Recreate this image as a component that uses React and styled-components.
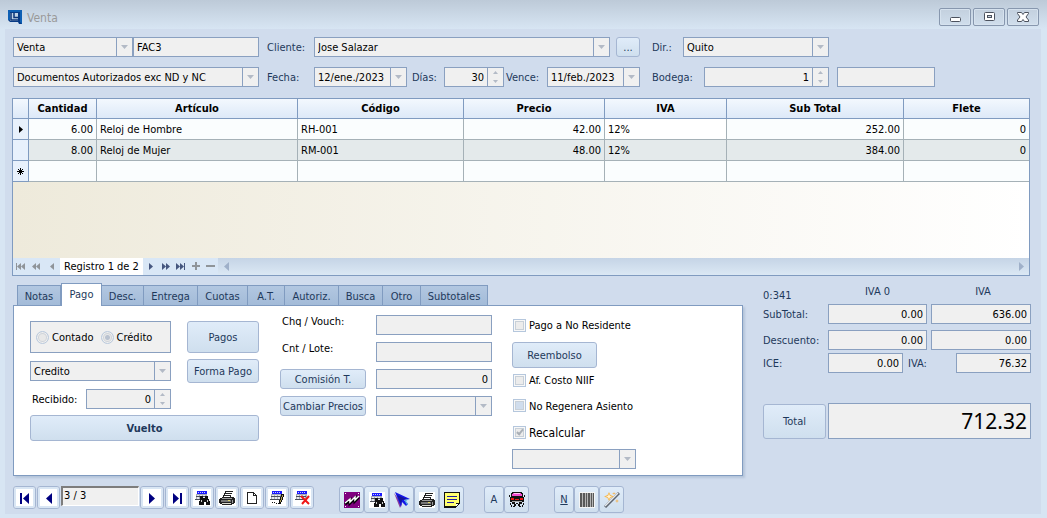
import React from 'react';
import styled, { createGlobalStyle, css } from 'styled-components';

const c = {
  line: '#8aa0c0',
  gridLine: '#a5b1b7',
  headLine: '#809bc0',
  field: '#f0f0f0',
  label: '#1e395b',
  panel: '#d0dced',
  frame: '#d7e5f3',
};

const Global = createGlobalStyle`
  *, *::before, *::after { box-sizing: border-box; }
  body { margin: 0; background: ${c.frame}; }
  body, button, input, select, table {
    font-family: Tahoma, "DejaVu Sans Condensed", "DejaVu Sans", sans-serif;
    font-stretch: condensed;
    font-size: 11px;
    line-height: 14px;
    color: #000;
  }
`;

const Window = styled.div`
  display: flex;
  flex-direction: column;
  min-height: 100vh;
  padding: 0 6px 4px 5px;
  background: linear-gradient(#bdcad8 0, ${c.frame} 29px);
`;

const TitleBar = styled.header`
  display: flex;
  align-items: center;
  height: 29px;
  padding: 5px 2px 0 3px;
`;

const Title = styled.h1`
  flex: 1;
  margin: 0 0 0 5px;
  padding-top: 2px;
  font-size: 12px;
  font-weight: 400;
  color: #9a9a9a;
`;

const WindowButtons = styled.div`
  display: flex;
  gap: 2px;
`;

const WindowButton = styled.button`
  display: grid;
  place-items: center;
  width: 32px;
  height: 18px;
  padding: 0;
  border: 1px solid #8797ae;
  border-radius: 2px;
  background: linear-gradient(#c3d0de, #d0deec);
  box-shadow: inset 0 0 0 1px #d6e2ee;
`;

const Main = styled.main`
  flex: 1;
  display: flex;
  flex-direction: column;
  padding: 8px 10px 1px 8px;
  background: ${c.panel};
`;

const HeaderForm = styled.form`
  display: grid;
  grid-template-columns: 246px 39px minmax(0, 326fr) minmax(0, 383fr);
  gap: 10px 8px;
  align-items: center;
`;

const Group = styled.div`
  display: flex;
  align-items: center;
  gap: ${(p) => p.$gap || 0}px;
  padding-left: ${(p) => p.$indent || 0}px;
`;

const Label = styled.label`
  flex: none;
  width: ${(p) => (p.$w ? `${p.$w}px` : 'auto')};
  padding-top: ${(p) => (p.$top ? 0 : 2)}px;
  padding-left: ${(p) => p.$pad || 0}px;
  align-self: ${(p) => (p.$top ? 'start' : 'center')};
  color: ${(p) => (p.$dark ? '#000' : c.label)};
  white-space: nowrap;
`;

const sized = css`
  flex: ${(p) => (p.$w ? 'none' : '1 1 0')};
  width: ${(p) => (p.$w ? `${p.$w}px` : 'auto')};
  min-width: 0;
`;

const TextBox = styled.input`
  ${sized}
  height: 20px;
  padding: 0 3px;
  border: 1px solid ${c.line};
  border-radius: 0;
  background: ${c.field};
  text-align: ${(p) => (p.$right ? 'right' : 'left')};
  outline: none;
`;

const TotalBox = styled(TextBox)`
  height: 36px;
  font-family: "Noto Sans", sans-serif;
  font-size: 21px;
`;

const Box = styled.span`
  ${sized}
  position: relative;
  display: flex;
  height: 20px;
  border: 1px solid ${c.line};
  background: ${c.field};
`;

const NativeSelect = styled.select`
  appearance: none;
  flex: 1;
  min-width: 0;
  padding: 1px 18px 0 3px;
  border: 0;
  background: transparent;
  outline: none;
`;

const ArrowCell = styled.span`
  position: absolute;
  inset: 0 0 0 auto;
  display: grid;
  place-items: center;
  width: 16px;
  border-left: 1px solid ${c.line};
  pointer-events: none;
`;

const SpinInput = styled.input`
  flex: 1;
  min-width: 0;
  padding: 1px 3px 0;
  border: 0;
  background: transparent;
  text-align: right;
  outline: none;
`;

const SpinButtons = styled.span`
  display: flex;
  flex-direction: column;
  width: 16px;
  border-left: 1px solid ${c.line};
`;

const SpinButton = styled.button`
  flex: 1;
  display: grid;
  place-items: center;
  padding: 0;
  border: 0;
  background: transparent;
`;

const Button = styled.button`
  ${sized}
  height: ${(p) => p.$h || 20}px;
  padding: 2px 0 0;
  border: 1px solid #a5b6d2;
  border-radius: 3px;
  background: linear-gradient(#e0ecf9, #cfdfee);
  color: ${c.label};
  white-space: nowrap;
  font-weight: ${(p) => (p.$bold ? 700 : 400)};
`;

const GridFrame = styled.section`
  flex: 1;
  display: flex;
  flex-direction: column;
  margin: 11px 1px 7px -1px;
  border: 1px solid ${c.headLine};
`;

const DataTable = styled.table`
  width: 100%;
  table-layout: fixed;
  border-collapse: separate;
  border-spacing: 0;
`;

const HeadCell = styled.th`
  height: 20px;
  padding: 0;
  border: solid ${c.headLine};
  border-width: 0 1px 1px 0;
  background: linear-gradient(#f3f8fe, #dde9f8);
  font-weight: 700;
  &:last-child { border-right: 0; }
`;

const Row = styled.tr`
  background: ${(p) => (p.$alt ? '#e4eaeb' : '#fafdfe')};
`;

const MarkerCell = styled.th`
  height: 21px;
  padding: 0;
  border: solid ${c.headLine};
  border-width: 0 1px 1px 0;
  background: #e8f1fc;
  svg { display: block; margin: auto; }
`;

const Cell = styled.td`
  height: 21px;
  padding: 2px 3px 0;
  border: solid ${c.gridLine};
  border-width: 0 1px 1px 0;
  text-align: ${(p) => (p.$right ? 'right' : 'left')};
  background: ${(p) => (p.$focus ? '#fff' : 'transparent')};
  white-space: nowrap;
  &:last-child { border-right: 0; }
`;

const EmptyArea = styled.div`
  flex: 1;
  min-height: 76px;
  background: linear-gradient(90deg, #eeeadb, #fff);
`;

const Navigator = styled.div`
  display: flex;
  height: 17px;
  background: #d9e7f6;
`;

const NavButton = styled.button`
  display: grid;
  place-items: center;
  width: ${(p) => p.$w || 15}px;
  padding: 0;
  border: 0;
  background: transparent;
  color: ${(p) => (p.$on ? '#46577f' : '#8f9499')};
`;

const ScrollButton = styled(NavButton)`
  width: 17px;
  color: #9fb0c9;
`;

const RecordText = styled.span`
  width: 83px;
  padding-top: 2px;
  background: #fff;
  text-align: center;
  white-space: nowrap;
`;

const ScrollTrack = styled.div`
  flex: 1;
  display: flex;
  justify-content: space-between;
  background: linear-gradient(#c5d4e6, #dbe8f4);
`;

const Lower = styled.div`
  display: flex;
  gap: 20px;
  align-items: flex-start;
`;

const TabSection = styled.section`
  flex: 1;
  min-width: 0;
`;

const TabStrip = styled.div`
  display: flex;
  align-items: flex-end;
  height: 22px;
  padding-left: 4px;
`;

const Tab = styled.button`
  width: ${(p) => p.$w}px;
  height: ${(p) => (p.$active ? 23 : 20)}px;
  margin-bottom: ${(p) => (p.$active ? -1 : 0)}px;
  padding: ${(p) => (p.$active ? 0 : 2)}px 0 0;
  position: relative;
  border: 1px solid ${c.headLine};
  border-bottom: 0;
  border-left-width: ${(p) => (p.$first || p.$active ? 1 : 0)}px;
  background: ${(p) => (p.$active ? '#fff' : 'linear-gradient(#b2c7e1, #a3bbd8)')};
  color: ${c.label};
  white-space: nowrap;
`;

const TabPanel = styled.div`
  display: flex;
  height: 171px;
  padding: 9px 16px 0;
  border: 1px solid ${c.headLine};
  background: #fff;
  box-shadow: 2px 2px 2px #b5c5da;
`;

const PayColumn = styled.div`
  display: grid;
  grid-template-columns: 141px 72px;
  grid-template-rows: 32px 24px 20px 26px;
  column-gap: 16px;
  row-gap: 6px;
  align-content: start;
  align-items: center;
  padding-top: 6px;
`;

const WideCell = styled.div`
  grid-column: 1 / -1;
  display: flex;
`;

const RadioBox = styled.fieldset`
  display: flex;
  align-items: center;
  height: 32px;
  margin: 0;
  padding: 0 5px;
  border: 1px solid ${c.line};
  background: ${c.field};
`;

const Choice = styled.label`
  display: flex;
  align-items: center;
  gap: 3px;
  margin-right: 7px;
  white-space: nowrap;
`;

const Caption = styled.span`
  padding-top: 2px;
`;

const Radio = styled.input`
  appearance: none;
  width: 13px;
  height: 13px;
  margin: 0;
  border: 1px solid #b9c9dd;
  border-radius: 50%;
  background: #e8e8e8;
  box-shadow: inset 0 0 0 1px #f0f0f0, inset 0 0 0 2px #cfd4da;
  &:checked {
    background: radial-gradient(circle, #b9c2d0 0 2px, #e8e8e8 3px);
  }
`;

const VoucherColumn = styled.div`
  display: grid;
  grid-template-columns: 86px 116px;
  grid-auto-rows: 20px;
  gap: 7px 10px;
  align-content: start;
  align-items: center;
  margin-left: 21px;
`;

const OptionColumn = styled.div`
  display: flex;
  flex-direction: column;
  align-items: flex-start;
  margin-left: 20px;
`;

const CheckRow = styled.label`
  display: flex;
  align-items: center;
  gap: 3px;
  height: ${(p) => p.$h || 27}px;
  padding-left: 1px;
  font-size: ${(p) => (p.$large ? 12 : 11)}px;
  white-space: nowrap;
`;

const Check = styled.input`
  appearance: none;
  display: grid;
  place-items: center;
  width: 13px;
  height: 13px;
  margin: 0;
  border: 1px solid #b5c7dd;
  background: ${(p) => (p.$tinted ? '#d0dded' : '#ececec')};
  box-shadow: inset 0 0 0 1px #f8f8f8, inset 0 0 0 2px #c8d0d8;
  &:checked::after {
    content: "";
    width: 4px;
    height: 7px;
    margin-top: -2px;
    border: solid #a9afb6;
    border-width: 0 2px 2px 0;
    rotate: 40deg;
  }
`;

const Totals = styled.section`
  flex: none;
  width: 268px;
`;

const TotalsHeader = styled.div`
  display: grid;
  grid-template-columns: 65px 99px 104px;
  height: 21px;
`;

const TotalsHead = styled.span`
  padding-top: ${(p) => (p.$low ? 6 : 2)}px;
  padding-left: ${(p) => p.$pad || 0}px;
  color: ${c.label};
  text-align: ${(p) => (p.$low ? 'left' : 'center')};
`;

const TotalsLine = styled.div`
  display: flex;
  align-items: center;
  gap: ${(p) => p.$gap || 0}px;
`;

const Space = styled.div`
  height: ${(p) => p.$h}px;
`;

const Toolbar = styled.nav`
  display: flex;
  align-items: flex-start;
  min-height: 27px;
  margin-top: 10px;
`;

const ToolGroup = styled.div`
  display: flex;
  gap: ${(p) => p.$gap || 0}px;
  margin-right: ${(p) => p.$after || 0}px;
`;

const ToolButton = styled.button`
  display: grid;
  place-items: center;
  width: ${(p) => p.$w || 24}px;
  height: ${(p) => (p.$tall ? 27 : 23)}px;
  padding: 0;
  border: 1px solid #a5b6d2;
  border-radius: 3px;
  background: ${(p) => (p.$tall ? 'linear-gradient(#e0ecf9, #cfdfee)' : '#fff')};
  box-shadow: ${(p) => (p.$tall ? 'none' : 'inset 0 0 0 2px #d9e6f4')};
  color: ${c.label};
`;

const PageBox = styled.input`
  width: 78px;
  height: 20px;
  padding: 0 1px 2px;
  border: 1px solid;
  border-width: 2px 1px 1px 2px;
  border-color: #7d7d7d #fff #fff #7d7d7d;
  background: ${c.field};
  outline: none;
`;

const Down = () => (
  <svg width="7" height="4" viewBox="0 0 7 4"><path d="M0 0h7L3.500 4z" fill="#b3bac6" /></svg>
);
const Up = () => (
  <svg width="5" height="3" viewBox="0 0 5 3"><path d="M0 3h5L2.500 0z" fill="#b3bac6" /></svg>
);
const SmallDown = () => (
  <svg width="5" height="3" viewBox="0 0 5 3"><path d="M0 0h5L2.500 3z" fill="#b3bac6" /></svg>
);

function Select({ w, value, label, id }) {
  return (
    <Box $w={w}>
      <NativeSelect id={id} aria-label={label} defaultValue={value}>
        <option>{value}</option>
      </NativeSelect>
      <ArrowCell><Down /></ArrowCell>
    </Box>
  );
}

function Spinner({ w, value, id }) {
  return (
    <Box $w={w}>
      <SpinInput id={id} defaultValue={value} />
      <SpinButtons>
        <SpinButton type="button" aria-label="Aumentar"><Up /></SpinButton>
        <SpinButton type="button" aria-label="Disminuir"><SmallDown /></SpinButton>
      </SpinButtons>
    </Box>
  );
}

const navPaths = {
  first: 'M0 1h1v7H0zM5 1v7L1 4.500zM9 1v7L5 4.500z',
  rewind: 'M5 1v7L1 4.500zM9 1v7L5 4.500z',
  prev: 'M7 1v7L3 4.500z',
  next: 'M3 1v7l4-3.500z',
  forward: 'M1 1v7l4-3.500zM5 1v7l4-3.500z',
  last: 'M0 1v7l4-3.500zM4 1v7l4-3.500zM8 1h1v7H8z',
  add: 'M4 0h2v3h3v2H6v3H4V5H1V3h3z',
  remove: 'M0 3h9v2H0z',
  left: 'M7 0v9L2 4.500z',
  right: 'M3 0v9l5-4.500z',
};
const NavIcon = ({ name }) => (
  <svg width="10" height="9" viewBox="0 0 10 9"><path d={navPaths[name]} fill="currentColor" /></svg>
);

const Svg = ({ children }) => (
  <svg width="16" height="16" viewBox="0 0 16 16" shapeRendering="crispEdges">{children}</svg>
);

const Sheet = () => (
  <>
    <path d="M0 0h16v16H0z" fill="#fff" />
    <path d="M3 1h10v3H3z" fill="#1a1aff" />
    <path d="M4 2h1v1H4zM6 2h1v1H6zM8 2h1v1H8zM10 2h1v1h-1z" fill="#c9c9ff" />
    <path d="M2 4h11v6H2z" fill="#a9adb8" />
    <path d="M2 6h10v1H2zM1 9h11v1H1z" fill="#4a4e58" />
    <path d="M3 5h2v1H3zM6 5h2v1H6zM9 5h2v1H9zM3 7h2v2H3zM6 7h2v2H6zM9 7h2v2H9z" fill="#e8eaf0" />
  </>
);

const icons = {
  first: <path d="M3 3h2v11H3zM12 3v11L6 8.500z" fill="#000080" shapeRendering="auto" />,
  prev: <path d="M11 3v11L5 8.500z" fill="#000080" shapeRendering="auto" />,
  next: <path d="M5 3v11l6-5.500z" fill="#000080" shapeRendering="auto" />,
  last: <path d="M4 3v11l6-5.500zM11 3h2v11h-2z" fill="#000080" shapeRendering="auto" />,
  find: (
    <>
      <Sheet />
      <path d="M6 6h3v2h2V6h3v3h1v2h1v4h-4v-3h-2v3H5v-4h1z" fill="#111" />
      <path d="M7 10h1v2H7zM13 10h1v2h-1z" fill="#ccc" />
    </>
  ),
  print: (
    <>
      <path d="M0 0h16v16H0z" fill="#fff" />
      <path d="M6 1h8v1h-1v2h-1v3H4V5h1V3h1z" fill="#222" />
      <path d="M7 2h6v1H7zM6 4h6v1H6zM5 6h6v1H5z" fill="#fff" />
      <path d="M3 7h12v1h1v5h-1v1h-2v1H3v-1H1v-1H0V9h1V8h2z" fill="#222" />
      <path d="M3 8h10v1H3zM13 10h1v3h-1z" fill="#9c9c9c" />
      <path d="M2 10h10v2H2z" fill="#777" />
      <path d="M3 13h9v1H3z" fill="#d9d9d0" />
      <path d="M9 10h2v1H9z" fill="#e0d860" />
    </>
  ),
  blank: <path d="M3.500 2.500h6l3 3v8h-9zM9.500 2.500v3h3" fill="#fff" stroke="#222" />,
  edit: (
    <>
      <Sheet />
      <path d="M12 4h3v3h-1v3h-1v2h-1v2h-2v-4h1V7h1z" fill="#111" />
      <path d="M13 5h1v2h-1zM12 7h1v3h-1zM11 10h1v2h-1z" fill="#b0a058" />
      <path d="M3 12h1v1H3zM5 12h1v1H5zM7 13h1v1H7zM9 13h1v1H9z" fill="#111" />
    </>
  ),
  remove: (
    <>
      <Sheet />
      <path d="M7 6l8 8M15 6l-7 8" stroke="#f01818" strokeWidth="2" fill="none" shapeRendering="auto" />
    </>
  ),
  chart: (
    <>
      <path d="M0 0h16v16H0z" fill="#80007f" />
      <path d="M1 1h1v1H1zM14 1h1v1h-1zM1 14h1v1H1zM14 14h1v1h-1z" fill="#fff" />
      <g shapeRendering="auto" fill="none">
        <path d="M1 12l5-4v3l5-5v3l4-4" stroke="#000" strokeWidth="3" />
        <path d="M1 11l5-4v3l5-5v3l4-4" stroke="#fff" strokeWidth="1.500" />
      </g>
    </>
  ),
  arrow: (
    <g shapeRendering="auto">
      <path d="M0 1l6 15 2-4z" fill="#8c3f9c" />
      <path d="M1 0l15 7-6 1 4 4-2 2-4-4-1 5z" fill="#1616e8" />
      <path d="M3 3l4 9 1-4 5-1z" fill="#15159a" />
      <path d="M10 8l5-1-3 2 2 3-1 1z" fill="#54a8e0" />
    </g>
  ),
  note: (
    <>
      <path d="M0 0h16v12h-1v1h-1v1h-1v1h-1v1H0z" fill="#111" />
      <path d="M1 1h14v10h-3v3H1z" fill="#ffff70" />
      <path d="M3 4h10v1H3zM3 7h10v1H3zM3 10h7v1H3z" fill="#1c1ca0" />
      <path d="M12 12h2v1h-1v1h-1z" fill="#fff" />
    </>
  ),
  car: (
    <>
      <path d="M3 0h10v1h1v4H2V1h1z" fill="#111" />
      <path d="M4 1h8v1h1v2H3V2h1z" fill="#f04cd0" />
      <path d="M5 1h6v1H5z" fill="#ffc0f0" />
      <path d="M1 5h14v5H1z" fill="#111" />
      <path d="M2 6h3v2H2zM11 6h3v2h-3zM6 7h4v1H6z" fill="#e81818" />
      <path d="M3 9h10v1H3z" fill="#aaa" />
      <path d="M3 10h3v2h1v2H6v1H4v-1h1v-2H3zM10 10h3v2h-2v2h1v1h-2v-1H9v-2h1z" fill="#111" />
      <path d="M0 3h1v2H0zM15 3h1v2h-1zM7 11h2v1H7zM1 11h1v2H1zM14 11h1v2h-1zM2 13h1v2H2zM13 13h1v2h-1z" fill="#111" />
    </>
  ),
  barcode: (
    <>
      <path d="M0 0h16v16H0z" fill="#f4f4f4" />
      <path d="M1 1h14v14H1z" fill="#b4b4b4" />
      <path d="M1 1h2v14H1zM4 1h2v14H4zM7 1h1v14H7zM9 1h2v14H9zM12 1h1v14h-1zM14 1h1v14h-1z" fill="#585858" />
    </>
  ),
  wand: (
    <g shapeRendering="auto">
      <path d="M1 15L15 1" stroke="#5f6771" strokeWidth="3" />
      <path d="M1 14L14 1" stroke="#e6eaee" strokeWidth="1.500" />
      <path d="M5 0l1.500 3L10 4.500 6.500 6 5 9 3.500 6 0 4.500 3.500 3z" fill="#f6b850" />
      <path d="M5 2l1 2 2 .5L6 5.200 5 7 4 5.200 2 4.500 4 4z" fill="#fff3d8" />
      <path d="M13 7l.6 1.400L15 9l-1.400.6L13 11l-.6-1.400L11 9l1.400-.6zM10 0l.5 1L12 1.500l-1.500.5L10 3l-.5-1L8 1.500 9.500 1z" fill="#f3b860" />
    </g>
  ),
};

const toolNames = {
  next: 'Siguiente',
  last: 'Último',
  find: 'Buscar',
  print: 'Imprimir',
  blank: 'Nuevo',
  edit: 'Editar',
  remove: 'Eliminar',
  chart: 'Gráfico',
  arrow: 'Seleccionar',
  note: 'Nota',
};

const columns = [
  ['Cantidad', 68, true],
  ['Artículo', 201],
  ['Código', 166],
  ['Precio', 141, true],
  ['IVA', 122],
  ['Sub Total', 177, true],
  ['Flete', 125, true],
];

const rows = [
  ['6.00', 'Reloj de Hombre', 'RH-001', '42.00', '12%', '252.00', '0'],
  ['8.00', 'Reloj de Mujer', 'RM-001', '48.00', '12%', '384.00', '0'],
  ['', '', '', '', '', '', ''],
];

const markers = [
  <svg width="4" height="7" viewBox="0 0 4 7"><path d="M0 0l4 3.500L0 7z" fill="#000" /></svg>,
  null,
  <svg width="7" height="7" viewBox="0 0 7 7"><path d="M3.500 0v7M0 3.500h7M1 1l5 5M6 1L1 6" stroke="#000" /></svg>,
];

const tabs = [
  ['Notas', 44], ['Pago', 41], ['Desc.', 42], ['Entrega', 54], ['Cuotas', 50],
  ['A.T.', 37], ['Autoriz.', 54], ['Busca', 44], ['Otro', 38], ['Subtotales', 67],
];

export default function App() {
  return (
    <Window>
      <Global />
      <TitleBar>
        <svg width="14" height="14" viewBox="0 0 14 14">
          <path d="M0 0h14v14h-3l-1-2H2l-2-2z" fill="#073b86" />
          <path d="M2 3h8v8H2z" fill="#bfd2e6" />
          <path d="M0 0h14v2H2v8H0zM12 2h2v12l-2-2z" fill="#0d5fb4" />
          <path d="M3 3v7h7M6 3v4.500h4" stroke="#0b3478" strokeWidth="1.500" fill="none" />
        </svg>
        <Title>Venta</Title>
        <WindowButtons>
          <WindowButton aria-label="Minimizar">
            <svg width="12" height="12" viewBox="0 0 12 12"><rect x="1.500" y="6.500" width="10" height="4" rx="1" fill="#fff" stroke="#4c525e" /></svg>
          </WindowButton>
          <WindowButton aria-label="Maximizar">
            <svg width="12" height="12" viewBox="0 0 12 12"><rect x="1.500" y="1.500" width="10" height="8" rx="1" fill="#fff" stroke="#4c525e" /><rect x="4.500" y="4.500" width="4" height="2" fill="#c9d5e1" stroke="#4c525e" /></svg>
          </WindowButton>
          <WindowButton aria-label="Cerrar">
            <svg width="12" height="12" viewBox="0 0 12 12"><path d="M.5 1.500h4L6 3.500l1.500-2h4v1L9 6l2.500 3v1.500h-4L6 8.500l-1.500 2h-4V9L3 6 .5 2.500z" fill="#fff" stroke="#4c525e" /></svg>
          </WindowButton>
        </WindowButtons>
      </TitleBar>

      <Main>
        <HeaderForm>
          <Group>
            <Select w={120} value="Venta" label="Tipo de documento" />
            <TextBox aria-label="Serie" defaultValue="FAC3" />
          </Group>
          <Label htmlFor="cliente">Cliente:</Label>
          <Group $gap={6}>
            <Select id="cliente" value="Jose Salazar" />
            <Button type="button" $w={24}>...</Button>
          </Group>
          <Group $indent={4}>
            <Label htmlFor="dir" $w={31}>Dir.:</Label>
            <Select id="dir" w={146} value="Quito" />
          </Group>

          <Select value="Documentos Autorizados exc ND y NC" label="Autorización" />
          <Label htmlFor="fecha">Fecha:</Label>
          <Group>
            <Select id="fecha" value="12/ene./2023" />
            <Label htmlFor="dias" $w={37} $pad={5}>Días:</Label>
            <Spinner id="dias" w={60} value="30" />
            <Label htmlFor="vence" $w={43} $pad={2}>Vence:</Label>
            <Select id="vence" value="11/feb./2023" />
          </Group>
          <Group $indent={4}>
            <Label htmlFor="bodega" $w={52}>Bodega:</Label>
            <Spinner id="bodega" w={125} value="1" />
            <Group $indent={8}>
              <TextBox $w={98} aria-label="Nombre de bodega" />
            </Group>
          </Group>
        </HeaderForm>

        <GridFrame>
          <DataTable>
            <colgroup>
              <col width="16" />
              {columns.map(([name, w]) => <col key={name} width={w} />)}
            </colgroup>
            <thead>
              <tr>
                <HeadCell aria-label="Estado" />
                {columns.map(([name]) => <HeadCell key={name} scope="col">{name}</HeadCell>)}
              </tr>
            </thead>
            <tbody>
              {rows.map((row, r) => (
                <Row key={r} $alt={r === 1}>
                  <MarkerCell>{markers[r]}</MarkerCell>
                  {row.map((text, i) => (
                    <Cell key={i} $right={columns[i][2]} $focus={r === 0 && i === 4}>{text}</Cell>
                  ))}
                </Row>
              ))}
            </tbody>
          </DataTable>
          <EmptyArea />
          <Navigator>
            <NavButton aria-label="Primero"><NavIcon name="first" /></NavButton>
            <NavButton $w={16} aria-label="Página anterior"><NavIcon name="rewind" /></NavButton>
            <NavButton $w={16} aria-label="Anterior"><NavIcon name="prev" /></NavButton>
            <RecordText>Registro 1 de 2</RecordText>
            <NavButton $on aria-label="Siguiente"><NavIcon name="next" /></NavButton>
            <NavButton $on aria-label="Página siguiente"><NavIcon name="forward" /></NavButton>
            <NavButton $on aria-label="Último"><NavIcon name="last" /></NavButton>
            <NavButton aria-label="Agregar"><NavIcon name="add" /></NavButton>
            <NavButton aria-label="Quitar"><NavIcon name="remove" /></NavButton>
            <ScrollTrack>
              <ScrollButton aria-label="Desplazar a la izquierda"><NavIcon name="left" /></ScrollButton>
              <ScrollButton aria-label="Desplazar a la derecha"><NavIcon name="right" /></ScrollButton>
            </ScrollTrack>
          </Navigator>
        </GridFrame>

        <Lower>
          <TabSection>
            <TabStrip role="tablist">
              {tabs.map(([name, w], i) => (
                <Tab key={name} role="tab" aria-selected={i === 1} $w={w} $active={i === 1} $first={i === 0}>{name}</Tab>
              ))}
            </TabStrip>
            <TabPanel role="tabpanel">
              <PayColumn>
                <RadioBox>
                  <Choice><Radio type="radio" name="pago" /><Caption>Contado</Caption></Choice>
                  <Choice><Radio type="radio" name="pago" defaultChecked /><Caption>Crédito</Caption></Choice>
                </RadioBox>
                <Button $h={32} $w={72}>Pagos</Button>
                <Select value="Credito" label="Forma de pago" />
                <Button $h={24} $w={72}>Forma Pago</Button>
                <Group>
                  <Label $dark $w={56} $pad={2} htmlFor="recibido">Recibido:</Label>
                  <Spinner id="recibido" value="0" />
                </Group>
                <WideCell><Button $h={26} $bold>Vuelto</Button></WideCell>
              </PayColumn>

              <VoucherColumn>
                <Label $dark $top $pad={2} htmlFor="vouch">Chq / Vouch:</Label>
                <TextBox id="vouch" />
                <Label $dark $top $pad={2} htmlFor="lote">Cnt / Lote:</Label>
                <TextBox id="lote" />
                <Button>Comisión T.</Button>
                <TextBox $right aria-label="Comisión" defaultValue="0" />
                <Button>Cambiar Precios</Button>
                <Select value="" label="Precios" />
              </VoucherColumn>

              <OptionColumn>
                <CheckRow $h={20}><Check type="checkbox" /><Caption>Pago a No Residente</Caption></CheckRow>
                <Space $h={7} />
                <Button $w={85} $h={26}>Reembolso</Button>
                <CheckRow $h={24}><Check type="checkbox" /><Caption>Af. Costo NIIF</Caption></CheckRow>
                <CheckRow><Check type="checkbox" $tinted /><Caption>No Regenera Asiento</Caption></CheckRow>
                <CheckRow $large><Check type="checkbox" defaultChecked />Recalcular</CheckRow>
                <Space $h={3} />
                <Select w={124} value="" label="Recálculo" />
              </OptionColumn>
            </TabPanel>
          </TabSection>

          <Totals>
            <TotalsHeader>
              <TotalsHead $low>0:341</TotalsHead>
              <TotalsHead>IVA 0</TotalsHead>
              <TotalsHead $pad={8}>IVA</TotalsHead>
            </TotalsHeader>
            <TotalsLine $gap={4}>
              <Label $w={61} htmlFor="sub0">SubTotal:</Label>
              <TextBox id="sub0" $right $w={99} defaultValue="0.00" />
              <TextBox $right aria-label="SubTotal IVA" defaultValue="636.00" />
            </TotalsLine>
            <Space $h={6} />
            <TotalsLine $gap={4}>
              <Label $w={61} htmlFor="des0">Descuento:</Label>
              <TextBox id="des0" $right $w={99} defaultValue="0.00" />
              <TextBox $right aria-label="Descuento IVA" defaultValue="0.00" />
            </TotalsLine>
            <Space $h={3} />
            <TotalsLine>
              <Label $w={65} htmlFor="ice">ICE:</Label>
              <TextBox id="ice" $right $w={75} defaultValue="0.00" />
              <Label $w={53} $pad={5} htmlFor="iva">IVA:</Label>
              <TextBox id="iva" $right defaultValue="76.32" />
            </TotalsLine>
            <Space $h={30} />
            <TotalsLine $gap={2}>
              <Button $w={63} $h={35}>Total</Button>
              <TotalBox $right aria-label="Total" defaultValue="712.32" />
            </TotalsLine>
          </Totals>
        </Lower>

        <Toolbar aria-label="Acciones">
          <ToolGroup $gap={1} $after={25}>
            <ToolButton $w={23} aria-label="Primero"><Svg>{icons.first}</Svg></ToolButton>
            <ToolButton $w={23} aria-label="Anterior"><Svg>{icons.prev}</Svg></ToolButton>
            <PageBox aria-label="Registro" defaultValue="3 / 3" />
            {['next', 'last', 'find', 'print', 'blank', 'edit', 'remove'].map((name) => (
              <ToolButton key={name} aria-label={toolNames[name]}><Svg>{icons[name]}</Svg></ToolButton>
            ))}
          </ToolGroup>
          <ToolGroup $after={20}>
            {['chart', 'find', 'arrow', 'print', 'note'].map((name) => (
              <ToolButton key={name} $tall $w={25} aria-label={toolNames[name]}><Svg>{icons[name]}</Svg></ToolButton>
            ))}
          </ToolGroup>
          <ToolGroup $after={25}>
            <ToolButton $tall $w={20}>A</ToolButton>
            <ToolButton $tall $w={25} aria-label="Transporte"><Svg>{icons.car}</Svg></ToolButton>
          </ToolGroup>
          <ToolGroup>
            <ToolButton $tall $w={20}><u>N</u></ToolButton>
            <ToolButton $tall $w={25} aria-label="Código de barras"><Svg>{icons.barcode}</Svg></ToolButton>
            <ToolButton $tall $w={25} aria-label="Asistente"><Svg>{icons.wand}</Svg></ToolButton>
          </ToolGroup>
        </Toolbar>
      </Main>
    </Window>
  );
}
